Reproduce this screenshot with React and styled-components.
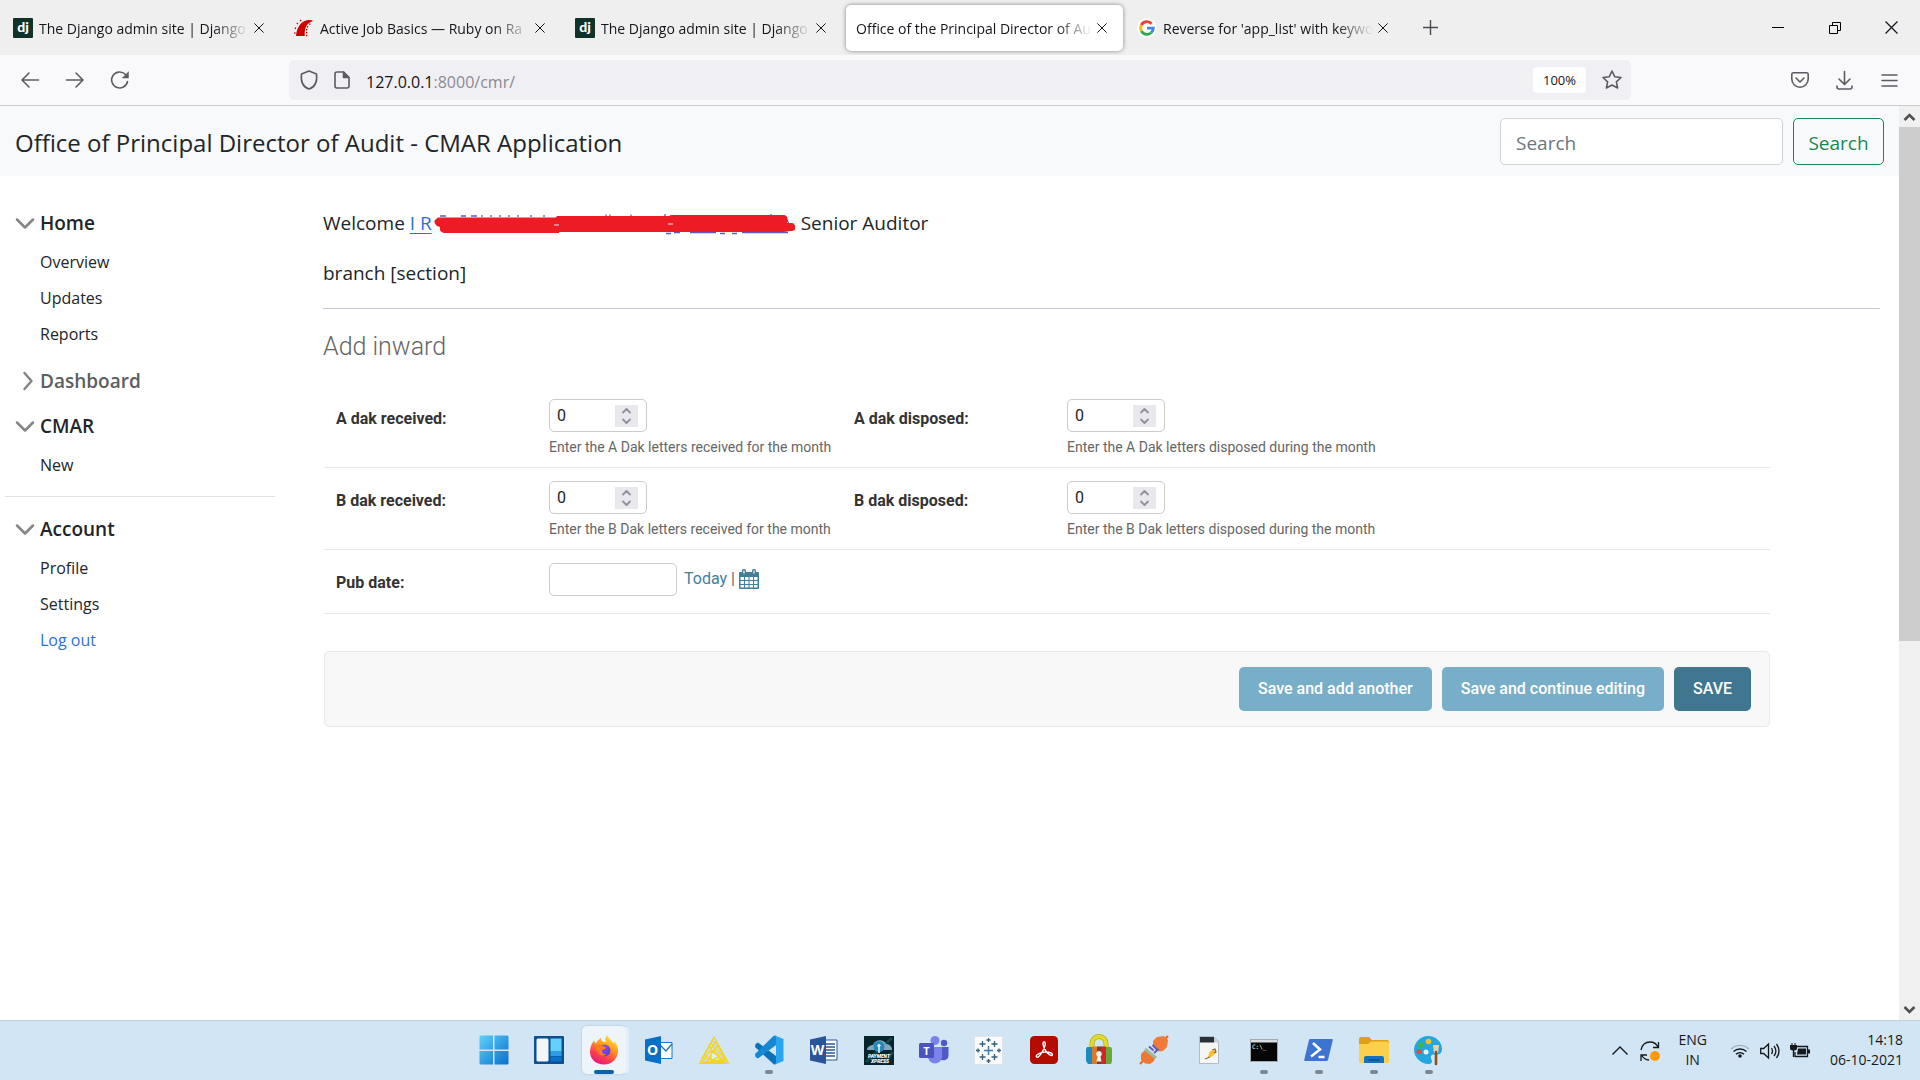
import React, { useState } from "react";
import styled, { createGlobalStyle, css } from "styled-components";

const ui = `"Open Sans", "Noto Sans", sans-serif`;
const admin = `Roboto, "Liberation Sans", sans-serif`;

const GlobalStyle = createGlobalStyle`
  *, *::before, *::after { box-sizing: border-box; }
  body { margin: 0; background: #fff; color: #212529; font-family: ${ui}; }
  button, input { font: inherit; color: inherit; margin: 0; }
  button { background: none; border: 0; padding: 0; cursor: pointer; }
  h1, p, ul { margin: 0; padding: 0; }
  ul { list-style: none; }
  svg { display: block; flex: none; overflow: visible; }
`;

/* ---------- window shell ---------- */

const Screen = styled.div`
  display: flex;
  flex-direction: column;
  height: 100vh;
  overflow: hidden;
`;

const TabStrip = styled.div`
  display: flex;
  align-items: center;
  height: 55px;
  flex: none;
  padding-left: 3px;
  background: #efefef;
  color: #15141a;
`;

const TabList = styled.div`
  display: flex;
  gap: 4px;
`;

const Tab = styled.div`
  display: flex;
  align-items: center;
  gap: 6px;
  width: 277px;
  height: 46px;
  padding: 0 13px 0 10px;
  border-radius: 5px;
  ${(p) => p.$active && css`
    background: #fff;
    box-shadow: 0 0 4px rgba(0, 0, 0, 0.45);
  `}
`;

const TabTitle = styled.button`
  flex: 1;
  min-width: 0;
  padding-top: 2px;
  white-space: nowrap;
  text-align: left;
  font-size: 14px;
  line-height: 24px;
  mask-image: linear-gradient(to left, transparent, #000 36px);
`;

const TabClose = styled.button`
  display: grid;
  place-items: center;
  width: 16px;
  height: 24px;
  margin-left: -4px;
`;

const NewTab = styled.button`
  display: grid;
  place-items: center;
  width: 40px;
  height: 40px;
  margin-left: 6px;
`;

const WindowButtons = styled.div`
  display: flex;
  margin-left: auto;
`;

const WindowButton = styled.button`
  display: grid;
  place-items: center;
  width: 57px;
  height: 54px;
`;

const Toolbar = styled.div`
  display: flex;
  align-items: center;
  height: 51px;
  flex: none;
  padding: 0 8px 0 7px;
  background: #f9f9fb;
  border-bottom: 1px solid #cccccf;
  color: #5b5b66;
`;

const ToolGroup = styled.div`
  display: flex;
  width: ${(p) => p.$width};
  flex: none;
  justify-content: ${(p) => p.$align || "flex-start"};
`;

const ToolButton = styled.button`
  display: grid;
  place-items: center;
  width: 45px;
  height: 40px;
`;

const AddressBar = styled.div`
  display: flex;
  align-items: center;
  gap: 16px;
  flex: 1;
  height: 40px;
  padding: 0 9px 0 11px;
  border-radius: 5px;
  background: #f0f0f4;
`;

const AddressText = styled.a`
  flex: 1;
  padding-top: 3px;
  font-size: 16px;
  line-height: 24px;
  color: #8a8a93;
  text-decoration: none;

  b { font-weight: 400; color: #15141a; }
`;

const ZoomLevel = styled.button`
  width: 53px;
  height: 26px;
  border-radius: 4px;
  background: #fff;
  color: #15141a;
  font-size: 13px;
`;

/* ---------- page ---------- */

const Viewport = styled.div`
  display: flex;
  flex: 1;
  min-height: 0;
`;

const Page = styled.div`
  flex: 1;
  min-width: 0;
  overflow: hidden;
`;

const ScrollTrack = styled.div`
  display: flex;
  flex-direction: column;
  width: 21px;
  flex: none;
  background: #f0f0f0;
`;

const ScrollArrow = styled.button`
  display: grid;
  place-items: center;
  height: 21px;
  flex: none;
`;

const ScrollSpace = styled.div`
  flex: 1;
`;

const ScrollThumb = styled.div`
  height: 59%;
  background: #cdcdcd;
`;

const Navbar = styled.header`
  display: flex;
  align-items: center;
  justify-content: space-between;
  height: 70px;
  padding: 0 15px;
  background: #f8f9fb;
`;

const Brand = styled.a`
  padding-top: 3px;
  font-size: 24px;
  line-height: 36px;
  color: #212529;
  text-decoration: none;
`;

const SearchForm = styled.form`
  display: flex;
  gap: 10px;
`;

const SearchInput = styled.input`
  width: 283px;
  height: 47px;
  padding: 3px 15px 0;
  border: 1px solid #ced4da;
  border-radius: 5px;
  background: #fff;
  font-size: 19px;

  &::placeholder { color: #6c757d; opacity: 1; }
`;

const SearchButton = styled.button`
  width: 91px;
  height: 47px;
  padding-top: 3px;
  border: 1px solid #198754;
  border-radius: 5px;
  font-size: 19px;
  color: #198754;
`;

const Columns = styled.div`
  display: flex;
`;

const Sidebar = styled.nav`
  display: flex;
  flex-direction: column;
  gap: 5px;
  width: 280px;
  flex: none;
  padding: 27px 5px 0;
`;

const GroupToggle = styled.button`
  display: flex;
  align-items: center;
  gap: 7px;
  width: 100%;
  height: 40px;
  padding-left: 12px;
  font-size: 19px;
  font-weight: 600;
  color: ${(p) => (p.$muted ? "#5c5e61" : "#212529")};
`;

const GroupLinks = styled.ul`
  padding: 1px 0 4px 35px;
`;

const GroupLink = styled.a`
  display: block;
  font-size: 16px;
  line-height: 36px;
  color: ${(p) => (p.$accent ? "#2f6fdc" : "#212529")};
  text-decoration: none;
`;

const SideRule = styled.hr`
  width: 100%;
  margin: 4px 0 7px;
  border: 0;
  border-top: 1px solid #dee2e6;
`;

const Main = styled.main`
  flex: 1;
  min-width: 0;
  padding: 32px 19px 0 43px;
`;

const Lead = styled.p`
  display: flex;
  align-items: center;
  margin-bottom: 20px;
  font-size: 19px;
  line-height: 30px;
  white-space: pre;
`;

const UserLink = styled.a`
  display: flex;
  align-items: center;
  gap: 2px;
  color: #2f6fdc;
  text-decoration: underline;
  text-underline-offset: 3px;
`;

const Rule = styled.hr`
  margin: 0;
  border: 0;
  border-top: 1px solid #c3c4d4;
`;

const Title = styled.h1`
  margin: 23px 0 24px;
  font: 300 25px/30px ${admin};
  color: #666;
`;

const AdminForm = styled.form`
  margin-right: 110px;
  padding-left: 1px;
  font-family: ${admin};
`;

const FormRow = styled.div`
  display: grid;
  grid-template-columns: 518px auto;
  padding: 13px 12px ${(p) => (p.$plain ? 17 : 11)}px;
  border-bottom: 1px solid #e8e8e8;
`;

const Pair = styled.div`
  display: grid;
  grid-template-columns: 213px auto;
`;

const Label = styled.label`
  padding-top: 10px;
  font-size: 16px;
  font-weight: 700;
  line-height: 20px;
  color: #333;
`;

const NumberBox = styled.div`
  display: flex;
  align-items: center;
  width: 98px;
  height: 33px;
  padding: 0 8px 0 7px;
  border: 1px solid #ccc;
  border-radius: 5px;
`;

const NumberInput = styled.input`
  flex: 1;
  min-width: 0;
  padding: 0;
  border: 0;
  outline: 0;
  background: none;
  font-size: 16px;
  appearance: textfield;

  &::-webkit-inner-spin-button { display: none; }
`;

const Spinner = styled.div`
  display: grid;
  grid-template-rows: 11px 11px;
  width: 23px;
  background: #e9e9ed;
  color: #8f8f9d;
`;

const SpinButton = styled.button`
  display: grid;
  place-items: center;
`;

const Help = styled.div`
  margin-top: 6px;
  font-size: 14px;
  line-height: 18px;
  color: #666;
`;

const DateLine = styled.div`
  display: flex;
  align-items: flex-start;
  gap: 7px;
`;

const DateInput = styled.input`
  width: 128px;
  height: 33px;
  padding: 0 7px;
  border: 1px solid #ccc;
  border-radius: 5px;
  font-size: 16px;
`;

const Shortcuts = styled.span`
  display: flex;
  align-items: center;
  gap: 4px;
  font-size: 16px;
  line-height: 31px;
  color: #666;

  a { color: #447e9b; text-decoration: none; }
`;

const SubmitRow = styled.div`
  display: flex;
  justify-content: flex-end;
  gap: 10px;
  margin-top: 37px;
  padding: 15px 18px;
  border: 1px solid #e8e8e8;
  border-radius: 5px;
  background: #f8f8f8;
`;

const SubmitButton = styled.button`
  height: 44px;
  padding: 0 19px 2px;
  border-radius: 5px;
  background: ${(p) => (p.$primary ? "#417690" : "#79aec8")};
  color: #fff;
  font-size: 16px;
  font-weight: 500;
`;

/* ---------- taskbar ---------- */

const Taskbar = styled.footer`
  display: grid;
  grid-template-columns: 1fr auto 1fr;
  height: 60px;
  flex: none;
  background: #d2e5f4;
  border-top: 1px solid #c3d0dd;
`;

const Apps = styled.div`
  grid-column: 2;
  display: flex;
  padding-left: 2px;
`;

const AppButton = styled.button`
  display: flex;
  flex-direction: column;
  align-items: center;
  width: 55px;
  height: 59px;
  padding-top: 5px;
`;

const AppTile = styled.span`
  display: grid;
  place-items: center;
  width: 44px;
  height: 48px;
  border-radius: 5px;
  ${(p) => p.$active && css`
    background: #edf4fa;
    box-shadow: 4px 0 0 -1px #e3eef7, 0 0 1px 1px #c6d7e6;
  `}
`;

const AppMark = styled.span`
  width: ${(p) => (p.$active ? 20 : 8)}px;
  height: 4px;
  margin-top: -4px;
  border-radius: 2px;
  background: ${(p) => (p.$active ? "#0a62ab" : p.$open ? "#7d8790" : "transparent")};
`;

const Tray = styled.div`
  display: flex;
  align-items: center;
  justify-content: flex-end;
  padding-right: 17px;
  color: #16191c;
`;

const TrayText = styled.button`
  margin: ${(p) => (p.$last ? "0 0 2px 15px" : "0 18px 2px 13px")};
  text-align: ${(p) => (p.$last ? "right" : "center")};
  font-size: 14px;
  line-height: 20px;
`;

const TrayButton = styled.button`
  display: grid;
  place-items: center;
  width: 30px;
  height: 40px;
`;

/* ---------- icons ---------- */

const Svg = ({ w = 20, h = w, vb, children, ...rest }) => (
  <svg width={w} height={h} viewBox={vb || `0 0 ${w} ${h}`} fill="none" aria-hidden="true" {...rest}>
    {children}
  </svg>
);

const Line = (p) => <Svg stroke="currentColor" strokeWidth="1.6" strokeLinecap="round" strokeLinejoin="round" {...p} />;

const DjangoIcon = () => (
  <Svg w={20}>
    <rect width="20" height="20" rx="1" fill="#113228" />
    <text x="10" y="14" textAnchor="middle" fontFamily="Lato, sans-serif" fontWeight="900" fontSize="14" fill="#fff">dj</text>
  </Svg>
);

const RailsIcon = () => (
  <Svg w={20}>
    <path d="M2 18C2.500 11 6 3.500 13 2.200C16 1.600 18 2 19 3C14 4.500 9.800 9 10.800 18Z" fill="#c00" />
    <path d="M4 6l-1.200-.8M2 10.500L.8 10M7 3L6.200 1.800M1.500 15H.2M13 8.500l1.200.6M12 11.500l1.400.4M12 14.500l1.400.2M12 17.500h1.400M15.500 5.500l.6 1.100" stroke="#c00" strokeWidth="1.400" />
  </Svg>
);

const GoogleIcon = () => (
  <Svg w={20}>
    <circle cx="10" cy="10" r="10" fill="#fff" />
    <g strokeWidth="2.900">
      <path d="M4.300 7.200A6.300 6.300 0 0 1 14.600 5.700" stroke="#ea4335" />
      <path d="M4.300 12.800A6.300 6.300 0 0 1 4.300 7.200" stroke="#fbbc05" />
      <path d="M14.200 14.700A6.300 6.300 0 0 1 4.300 12.800" stroke="#34a853" />
      <path d="M10 10.100H16.300A6.300 6.300 0 0 1 14.200 14.700" stroke="#4285f4" />
    </g>
  </Svg>
);

const CrossIcon = ({ size = 11, width = 1.2 }) => (
  <Svg w={size} vb="0 0 12 12" stroke="currentColor" strokeWidth={width}><path d="M.5.5l11 11M11.500.500l-11 11" /></Svg>
);

const ChevronIcon = ({ right }) => (
  <Svg w={16} stroke="#858585" strokeWidth="2.500" strokeLinecap="round" strokeLinejoin="round">
    <path d={right ? "M7.500 0l7 8-7 8" : "M0 4.500l8 8 8-8"} />
  </Svg>
);

const CalendarIcon = () => (
  <Svg w={20}>
    <path d="M0 4q0-1 1-1h18q1 0 1 1v15q0 1-1 1H1q-1 0-1-1z" fill="#447e9b" />
    <rect x="3" y="0" width="4" height="6" rx="1.500" fill="#447e9b" /><rect x="13" y="0" width="4" height="6" rx="1.500" fill="#447e9b" />
    <path d="M5 1.500v3M15 1.500v3" stroke="#fff" strokeWidth="1.200" />
    <path d="M1.500 8h3.500v3H1.500zM6 8h3.500v3H6zM10.500 8H14v3h-3.500zM15 8h3.500v3H15zM1.500 12h3.500v3H1.500zM6 12h3.500v3H6zM10.500 12H14v3h-3.500zM15 12h3.500v3H15zM1.500 16h3.500v2.500H1.500zM6 16h3.500v2.500H6zM10.500 16H14v2.500h-3.500zM15 16h3.500v2.500H15z" fill="#f4f8fa" />
  </Svg>
);

const Redaction = () => (
  <Svg w={362} h={22}>
    <g stroke="#5a5fc8" strokeWidth="1.300">
      <path d="M6 4h6M27 4h5M37 4h6M48 3v2M57 3v2M66 3v2M75 3v2M84 3v2M97 3v2M110 3v2M172 2.500v2M176 2.500v2M197 2.500v2M231 2v2M337 2v2M352 6l3 6" />
      <path d="M232 21.500h5M240 20.500h6M256 20.500h26M286 21.500h5M298 21.500h5M308 20.500h46" />
    </g>
    <path d="M4 5.500L122 5.500L123 4H235L237 3H350Q355 4 353 11H358Q362 12 361 17Q361 19 356 19L350 20H125V21H10Q5 20 6 15L3 14Q-1 10 1 8Z" fill="#ed1c24" />
    <path d="M120 13h5M234 12h5" stroke="#e4dff5" strokeWidth="1" />
  </Svg>
);

const StartIcon = () => (
  <Svg w={30}>
    <defs><linearGradient id="start" x1="0" y1="0" x2="1" y2="1"><stop stopColor="#5fd0fb" /><stop offset="1" stopColor="#0670cd" /></linearGradient></defs>
    <path d="M1.500.5H14v14H.5v-13zM15.500.5h13l1 1v13h-14zM.5 16H14v13.500H1.500l-1-1zM15.500 16h14v12.500l-1 1h-13z" fill="url(#start)" />
  </Svg>
);

const WidgetsIcon = () => (
  <Svg w={30} h={28}>
    <rect width="30" height="28" rx="1" fill="#0d4f92" />
    <rect x="2.500" y="2.500" width="12" height="23" rx="1.500" fill="#f3f5f8" />
    <path d="M16.500 2.500h11v12.500h-11z" fill="#62d2fb" /><path d="M16.500 15h11v5h-11z" fill="#2d9de8" /><path d="M16.500 20.500h11v5h-11z" fill="#0a72c8" />
  </Svg>
);

const FirefoxIcon = () => (
  <Svg w={30}>
    <defs>
      <linearGradient id="fx" x1=".8" y1="0" x2=".3" y2="1"><stop stopColor="#fff04a" /><stop offset=".4" stopColor="#ff9a1f" /><stop offset=".75" stopColor="#ff3a4f" /><stop offset="1" stopColor="#e31587" /></linearGradient>
      <linearGradient id="fxc" x1="0" y1="0" x2="1" y2="1"><stop stopColor="#b04cf0" /><stop offset="1" stopColor="#4a3fd0" /></linearGradient>
    </defs>
    <path d="M1 17C1 12 3 8 5 5.500C5.500 7 6 8 7 8.500C8 6 10 4 12 3C12 5 13 6.500 15 7L17 7C15.500 4 17 1.500 18.500 0C19.500 4 23 5 25 9C25.500 8 25.500 7 25 6C28 8.500 29.500 13 29 17C28 25 22 29.500 15 29.500C7 29.500 1 24 1 17Z" fill="url(#fx)" />
    <circle cx="15.500" cy="15.500" r="6" fill="url(#fxc)" />
    <path d="M7 11C9 9.500 12 10 14 11.500C16 12 17 12 17 13C16 14.500 14 14 13 15.500C12.500 18 14 19.500 17 19C14 23 7 20 7 11Z" fill="#ff7a28" />
  </Svg>
);

const OfficeIcon = ({ letter, color, children }) => (
  <Svg w={28}>
    {children}
    <path d="M0 3.500L16 0V28L0 24.500z" fill={color} />
    <text x="7.500" y="19" textAnchor="middle" fontFamily="Open Sans, sans-serif" fontWeight="700" fontSize="14" fill="#fff">{letter}</text>
  </Svg>
);

const OutlookIcon = () => (
  <OfficeIcon letter="O" color="#0a6fc2">
    <path d="M14 6.500h13v16H14z" fill="#fff" stroke="#1874c5" /><path d="M14 8l7 7 6-7" stroke="#1874c5" strokeWidth="1.300" />
  </OfficeIcon>
);

const WordIcon = () => (
  <OfficeIcon letter="W" color="#2a5699">
    <path d="M14 4h13v20H14z" fill="#fff" stroke="#2a5699" /><path d="M16 8h9M16 11h9M16 14h9M16 17h9M16 20h9" stroke="#2a5699" strokeWidth="1.300" />
  </OfficeIcon>
);

const TriangleIcon = () => (
  <Svg w={30} h={28} stroke="#f3d31b" strokeWidth="1.200" strokeLinejoin="round">
    <path d="M15 1L29.500 27.500H.5z" /><path d="M13.500 4L27 27.500 2 25z" /><path d="M12 7l13 20.500L3.500 22z" /><path d="M10.500 10L23 27 5 19.500z" /><path d="M17 5l11 20L3 27zM19 9l7 14L7 27z" />
    <path d="M12 15l8 5.500-8 4z" fill="#e4edf0" />
  </Svg>
);

const CodeIcon = () => (
  <Svg w={30}>
    <path d="M1.500 9L4 7.500 22 21V29L20 29.500 1 12z" fill="#0b71b8" />
    <path d="M1.500 22L4 23.500 22 10V1L20 .5 1 19z" fill="#1687d2" />
    <path d="M20.500.3L29.500 4V26l-9 3.700c1.200-1 1.500-2 1.500-3V3.500c0-1.500-.5-2.500-1.500-3.200z" fill="#2aa6f0" />
  </Svg>
);

const PaymentIcon = () => (
  <Svg w={30} h={29}>
    <path d="M0 0h30v29H0z" fill="#08242b" /><path d="M2 26L28 2M20 28l9-12" stroke="#12454d" strokeWidth="3" />
    <path d="M3 14c0-4 5-5 6-5 2-6 11-6 13-1 4 0 6 3 6 6z" fill="#7ba9bd" />
    <circle cx="15" cy="10.500" r="5.500" fill="#2688b8" /><path d="M15 10v7" stroke="#e4eef2" strokeWidth="1.600" /><circle cx="15" cy="9.500" r="1.600" fill="#e4eef2" />
    <text x="15" y="22" textAnchor="middle" fontFamily="Roboto, sans-serif" fontWeight="900" fontStyle="italic" fontSize="5" fill="#fff">PAYMENT</text>
    <text x="16" y="26.500" textAnchor="middle" fontFamily="Roboto, sans-serif" fontWeight="900" fontStyle="italic" fontSize="5" fill="#fff">XPRESS</text>
  </Svg>
);

const TeamsIcon = () => (
  <Svg w={30} h={28}>
    <circle cx="25" cy="7" r="3.200" fill="#5059c9" /><path d="M20 11h9.500v8.500a5 5 0 0 1-9.500 2z" fill="#5059c9" />
    <circle cx="16" cy="4.500" r="4.500" fill="#7b83eb" /><path d="M9 11h14v9.500a7 7 0 0 1-14 0z" fill="#7b83eb" />
    <rect y="7" width="15" height="15" rx="1.500" fill="#4b53bc" />
    <text x="7.500" y="18.500" textAnchor="middle" fontFamily="Open Sans, sans-serif" fontWeight="700" fontSize="11" fill="#fff">T</text>
  </Svg>
);

const PlusGridIcon = () => (
  <Svg w={29}>
    <path d="M.5.5h28v28H.5z" fill="#fbfbfb" stroke="#e0e4e8" />
    <path d="M14.500 10v9M10 14.500h9" stroke="#3f7cab" strokeWidth="1.500" />
    <path d="M8.500 5v6M5.500 8h6M20.500 5v6M17.500 8h6M8.500 18v6M5.500 21h6M20.500 18v6M17.500 21h6M14.500 2v4M12.500 4h4M14.500 23v4M12.500 25h4M4 12.500v4M2 14.500h4M25 12.500v4M23 14.500h4" stroke="#35617f" strokeWidth="1.300" />
  </Svg>
);

const AcrobatIcon = () => (
  <Svg w={28}>
    <rect width="28" height="28" rx="4.500" fill="#b30b00" />
    <path d="M14 6c2.500 0 1 5-1.500 9.500S7 22.500 6.300 20.500s6-5 10.500-4.500 6 1.500 5.500 3-4-.5-6.500-4S12 6 14 6z" stroke="#fff" strokeWidth="1.400" />
  </Svg>
);

const LockIcon = () => (
  <Svg w={26} h={30}>
    <path d="M6 14V8.500a7 7 0 0 1 14 0V14" stroke="#b3a91b" strokeWidth="5" /><path d="M6 14V8.500a7 7 0 0 1 14 0V14" stroke="#e0dc27" strokeWidth="3.600" />
    <path d="M1 12h6v17H2l-2-3V14z" fill="#1b8ac4" /><path d="M6 11.500h5V29H6z" fill="#d87a28" /><path d="M11 11.500h5V29h-5z" fill="#8b3a22" /><path d="M15 11.500h5V29h-5z" fill="#d42427" /><path d="M20 12h5l1 2v12l-1 3h-5z" fill="#66a83a" />
    <path d="M13 16a3 3 0 0 1 1.500 5.500l1 5h-5l1-5A3 3 0 0 1 13 16z" fill="#f0f2f2" />
  </Svg>
);

const PlugIcon = () => (
  <Svg w={30}>
    <path d="M25 5l4-4M1 29l4-4" stroke="#e46a2a" strokeWidth="2.200" />
    <path d="M14 6l4-4 7-1 4 4-1 7-4 4-4 .5-6-6.500z" fill="#f07b38" />
    <path d="M10 11.500l4.500 4M13.500 10l5 5M15 18l4.500-4" stroke="#5d58b0" strokeWidth="1.800" />
    <path d="M2 19l3-3h4l7 7-1 3-4 3-5-.500-4-4z" fill="#ef7633" /><path d="M6 14l11 9" stroke="#9fb99a" strokeWidth="3" />
  </Svg>
);

const NotepadIcon = () => (
  <Svg w={20} h={28}>
    <path d="M.5.500H15l4.500 5v22H.5z" fill="#f5f5f4" stroke="#b5bcc2" /><path d="M1 1h14v5.500H1z" fill="#2b3138" /><path d="M15 1l4.500 5.500H15z" fill="#c9ced2" />
    <path d="M9 21l2-6 5-1 1 3-5 4z" fill="#f6c02a" /><path d="M6 23l5-2M13 14l3-1 1 3-2 1" stroke="#7d7047" strokeWidth="1.200" />
  </Svg>
);

const TerminalIcon = () => (
  <Svg w={28} h={23}>
    <path d="M.5.5h27v22H.5z" fill="#060606" stroke="#a5a9ad" /><path d="M1 1h26v2.500H1z" fill="#d9dcde" />
    <text x="2" y="10" fontFamily="DejaVu Sans Mono, monospace" fontSize="6" fill="#fff">C:\_</text>
  </Svg>
);

const ShellIcon = () => (
  <Svg w={29} h={22}>
    <path d="M6 0h22q1 0 .8 1L24 21q-.3 1-1.300 1H1q-1 0-.8-1L5 1q.2-1 1-1z" fill="#3c74cf" />
    <path d="M9 4l7 6.500L7 17.500M14.500 18h6" stroke="#fff" strokeWidth="2.500" />
  </Svg>
);

const FolderIcon = () => (
  <Svg w={30} h={27}>
    <path d="M0 2q0-2 2-2h8l3 3h15q2 0 2 2v6H0z" fill="#dfa017" /><path d="M0 7h9l3-2.500h16q2 0 2 2V25q0 1-1.500 1h-27Q0 26 0 25z" fill="#fcd04d" />
    <path d="M5 26v-5q0-2 2-2h16q2 0 2 2v5z" fill="#1272c0" /><path d="M9.500 23h11" stroke="#0b4e8d" strokeWidth="1.500" />
  </Svg>
);

const PaintIcon = () => (
  <Svg w={29}>
    <path d="M14 0C22 0 28 6 28 13c0 5-4 6-7 5.500-4-.5-5 2-3.500 5 1.500 3-.5 5-4 4.500C6 27 0 21 0 14S6 0 14 0z" fill="#22a7de" />
    <circle cx="7" cy="9" r="2.800" fill="#40b549" /><circle cx="14.500" cy="5.500" r="2.800" fill="#f2c230" /><circle cx="5" cy="15.500" r="2.600" fill="#d8523c" /><circle cx="12" cy="16" r="2.500" fill="#e7f5fb" />
    <path d="M19 9h6l-1 8h-4z" fill="#e5d3b5" /><path d="M22 16v12" stroke="#8a4f22" strokeWidth="2.600" strokeLinecap="round" />
  </Svg>
);

/* ---------- data ---------- */

const tabs = [
  { icon: <DjangoIcon />, title: "The Django admin site | Django" },
  { icon: <RailsIcon />, title: "Active Job Basics — Ruby on Ra" },
  { icon: <DjangoIcon />, title: "The Django admin site | Django" },
  { title: "Office of the Principal Director of Au", active: true },
  { icon: <GoogleIcon />, title: "Reverse for 'app_list' with keywo" },
];

const groups = [
  { name: "Home", links: ["Overview", "Updates", "Reports"] },
  { name: "Dashboard", closed: true, links: [] },
  { name: "CMAR", links: ["New"] },
  { rule: true },
  { name: "Account", links: ["Profile", "Settings", "Log out"] },
];

const rows = [["A", "received", "for"], ["A", "disposed", "during"], ["B", "received", "for"], ["B", "disposed", "during"]];

const apps = [
  ["Start", StartIcon], ["Widgets", WidgetsIcon], ["Firefox", FirefoxIcon, "active"], ["Outlook", OutlookIcon],
  ["Drawing", TriangleIcon], ["Code", CodeIcon, "open"], ["Word", WordIcon], ["Payment Xpress", PaymentIcon],
  ["Teams", TeamsIcon], ["Tableau", PlusGridIcon], ["Acrobat", AcrobatIcon], ["Lock", LockIcon], ["Plug", PlugIcon],
  ["Notepad", NotepadIcon], ["Command prompt", TerminalIcon, "open"], ["PowerShell", ShellIcon, "open"],
  ["Files", FolderIcon, "open"], ["Paint", PaintIcon, "open"],
];

/* ---------- parts ---------- */

function NumberField({ kind, action, word }) {
  const [value, setValue] = useState(0);
  const id = `${kind}-${action}`;
  return (
    <Pair>
      <Label htmlFor={id}>{kind} dak {action}:</Label>
      <div>
        <NumberBox>
          <NumberInput id={id} type="number" value={value} onChange={(e) => setValue(e.target.value)} />
          <Spinner>
            <SpinButton type="button" aria-label="Increase" onClick={() => setValue(Number(value) + 1)}>
              <Line w={9} h={5} strokeWidth="1.800"><path d="M1 4.500L4.500 1 8 4.500" /></Line>
            </SpinButton>
            <SpinButton type="button" aria-label="Decrease" onClick={() => setValue(Number(value) - 1)}>
              <Line w={9} h={5} strokeWidth="1.800"><path d="M1 .5L4.500 4 8 .5" /></Line>
            </SpinButton>
          </Spinner>
        </NumberBox>
        <Help>Enter the {kind} Dak letters {action} {word} the month</Help>
      </div>
    </Pair>
  );
}

function BrowserChrome() {
  return (
    <>
      <TabStrip>
        <TabList>
          {tabs.map((t, i) => (
            <Tab key={i} $active={t.active}>
              {t.icon}
              <TabTitle>{t.title}</TabTitle>
              <TabClose aria-label="Close tab"><CrossIcon size={10} /></TabClose>
            </Tab>
          ))}
        </TabList>
        <NewTab aria-label="New tab">
          <Svg w={15} stroke="#4a4a52" strokeWidth="1.400"><path d="M7.500 0v15M0 7.500h15" /></Svg>
        </NewTab>
        <WindowButtons>
          <WindowButton aria-label="Minimize"><Svg w={12} stroke="#000"><path d="M0 5.500h12" /></Svg></WindowButton>
          <WindowButton aria-label="Restore"><Svg w={12} stroke="#000"><path d="M.5 3.500h8v8h-8zM3.500 3.500v-3h8v8h-3" /></Svg></WindowButton>
          <WindowButton aria-label="Close"><CrossIcon size={13} width={1.100} /></WindowButton>
        </WindowButtons>
      </TabStrip>
      <Toolbar>
        <ToolGroup $width="282px">
          <ToolButton aria-label="Back"><Line w={18}><path d="M17.500 9H1M8 2L1 9l7 7" /></Line></ToolButton>
          <ToolButton aria-label="Forward"><Line w={18}><path d="M.5 9H17M10 2l7 7-7 7" /></Line></ToolButton>
          <ToolButton aria-label="Reload">
            <Line w={18}><path d="M16.500 10.500A8 8 0 1 1 14.500 3.500" /><path d="M17.500 1v6h-6z" fill="currentColor" strokeWidth=".5" /></Line>
          </ToolButton>
        </ToolGroup>
        <AddressBar>
          <Line w={18} h={20}><path d="M9 1L16.500 4Q18 16 9 19Q0 16 1.500 4Z" /></Line>
          <Line w={16} h={18}><path d="M3 1h6.500L15 6.500V15q0 2-2 2H3q-2 0-2-2V3q0-2 2-2z" /><path d="M9.500 1v5.500H15z" fill="currentColor" /></Line>
          <AddressText href="#"><b>127.0.0.1</b>:8000/cmr/</AddressText>
          <ZoomLevel>100%</ZoomLevel>
          <Line w={20}><path d="M10 1l2.700 5.700 6.300.8-4.600 4.300 1.200 6.200L10 15l-5.600 3 1.200-6.200L1 7.500l6.300-.8z" /></Line>
        </AddressBar>
        <ToolGroup $width="281px" $align="flex-end">
          <ToolButton aria-label="Pocket"><Line w={18} h={16}><path d="M2.500.8h13q1.700 0 1.700 1.700V7a8.200 8.200 0 0 1-16.400 0V2.500Q.8.800 2.500.8zM5 6l4 4 4-4" /></Line></ToolButton>
          <ToolButton aria-label="Downloads"><Line w={17} h={19}><path d="M8.500.5V13M3 8l5.500 5.500L14 8M1 15v1q0 2 2 2h11q2 0 2-2v-1" /></Line></ToolButton>
          <ToolButton aria-label="Menu"><Line w={15} h={13}><path d="M0 1h15M0 6.500h15M0 12h15" /></Line></ToolButton>
        </ToolGroup>
      </Toolbar>
    </>
  );
}

function SideNav() {
  return (
    <Sidebar>
      {groups.map((g, i) =>
        g.rule ? <SideRule key={i} /> : (
          <div key={i}>
            <GroupToggle $muted={g.closed} aria-expanded={!g.closed}><ChevronIcon right={g.closed} />{g.name}</GroupToggle>
            {g.links.length > 0 && (
              <GroupLinks>
                {g.links.map((l) => <li key={l}><GroupLink href="#" $accent={l === "Log out"}>{l}</GroupLink></li>)}
              </GroupLinks>
            )}
          </div>
        )
      )}
    </Sidebar>
  );
}

function InwardForm() {
  return (
    <AdminForm onSubmit={(e) => e.preventDefault()}>
      {[0, 2].map((start) => (
        <FormRow key={start}>
          {rows.slice(start, start + 2).map(([kind, action, word]) => (
            <NumberField key={action} kind={kind} action={action} word={word} />
          ))}
        </FormRow>
      ))}
      <FormRow $plain>
        <Pair>
          <Label htmlFor="pub-date">Pub date:</Label>
          <DateLine>
            <DateInput id="pub-date" type="text" />
            <Shortcuts>
              <a href="#">Today</a>|<a href="#" aria-label="Choose a date"><CalendarIcon /></a>
            </Shortcuts>
          </DateLine>
        </Pair>
      </FormRow>
      <SubmitRow>
        <SubmitButton>Save and add another</SubmitButton>
        <SubmitButton>Save and continue editing</SubmitButton>
        <SubmitButton $primary>SAVE</SubmitButton>
      </SubmitRow>
    </AdminForm>
  );
}

function SystemBar() {
  return (
    <Taskbar>
      <Apps>
        {apps.map(([name, Icon, state]) => (
          <AppButton key={name} aria-label={name}>
            <AppTile $active={state === "active"}><Icon /></AppTile>
            <AppMark $active={state === "active"} $open={state === "open"} />
          </AppButton>
        ))}
      </Apps>
      <Tray>
        <TrayButton aria-label="Hidden icons"><Svg w={16} h={9} stroke="currentColor" strokeWidth="1.400"><path d="M.5 8.500L8 1l7.500 7.500" /></Svg></TrayButton>
        <TrayButton aria-label="Updates">
          <Svg w={20} stroke="currentColor" strokeWidth="1.300">
            <path d="M1 9C2 4 5.500 1 10 1c3.500 0 6.500 2 8 5M18.500 1v5.500H13M9 19c-3-.2-6-2-7.500-5M1 20v-6h6" />
            <circle cx="15" cy="15" r="5" fill="#ff9a0c" stroke="none" />
          </Svg>
        </TrayButton>
        <TrayText>ENG<br />IN</TrayText>
        <TrayButton aria-label="Network">
          <Svg w={18} h={14} stroke="currentColor" strokeWidth="1.400">
            <path d="M0 5a13 13 0 0 1 18 0" stroke="#9fb0be" /><path d="M2.500 7.500a9.500 9.500 0 0 1 13 0M5 10.200a6 6 0 0 1 8 0" /><circle cx="9" cy="12" r="1.800" fill="currentColor" stroke="none" />
          </Svg>
        </TrayButton>
        <TrayButton aria-label="Volume">
          <Svg w={20} h={16} stroke="currentColor" strokeWidth="1.300">
            <path d="M.7 5.500h3L8.500 1v14l-4.800-4.500h-3zM11.500 5q2 3 0 6M14 3q3.800 5 0 10M16.500 1q5 7 0 14" />
          </Svg>
        </TrayButton>
        <TrayButton aria-label="Battery">
          <Svg w={20} h={15}>
            <path d="M7 3.500h10.500v10H5V9" stroke="currentColor" strokeWidth="1.300" /><path d="M8 5.500h8v6H7z" fill="currentColor" /><path d="M18 6.500h2v4h-2zM0 2h7v3q0 2.500-2.800 2.500V14H2.800V7.500Q0 7.500 0 5zM1.500 0h1v2h-1zM4.500 0h1v2h-1z" fill="currentColor" />
          </Svg>
        </TrayButton>
        <TrayText $last>14:18<br />06-10-2021</TrayText>
      </Tray>
    </Taskbar>
  );
}

export default function App() {
  return (
    <Screen>
      <GlobalStyle />
      <BrowserChrome />
      <Viewport>
        <Page>
          <Navbar>
            <Brand href="#">Office of Principal Director of Audit - CMAR Application</Brand>
            <SearchForm onSubmit={(e) => e.preventDefault()}>
              <SearchInput type="search" placeholder="Search" aria-label="Search" />
              <SearchButton>Search</SearchButton>
            </SearchForm>
          </Navbar>
          <Columns>
            <SideNav />
            <Main>
              <Lead>Welcome <UserLink href="#">I R<Redaction /></UserLink> Senior Auditor</Lead>
              <Lead>branch [section]</Lead>
              <Rule />
              <Title>Add inward</Title>
              <InwardForm />
            </Main>
          </Columns>
        </Page>
        <ScrollTrack>
          <ScrollArrow aria-label="Scroll up"><Svg w={11} h={8} stroke="#505050" strokeWidth="2.600"><path d="M.5 7l5-5 5 5" /></Svg></ScrollArrow>
          <ScrollSpace><ScrollThumb /></ScrollSpace>
          <ScrollArrow aria-label="Scroll down"><Svg w={11} h={8} stroke="#505050" strokeWidth="2.600"><path d="M.5 1l5 5 5-5" /></Svg></ScrollArrow>
        </ScrollTrack>
      </Viewport>
      <SystemBar />
    </Screen>
  );
}
